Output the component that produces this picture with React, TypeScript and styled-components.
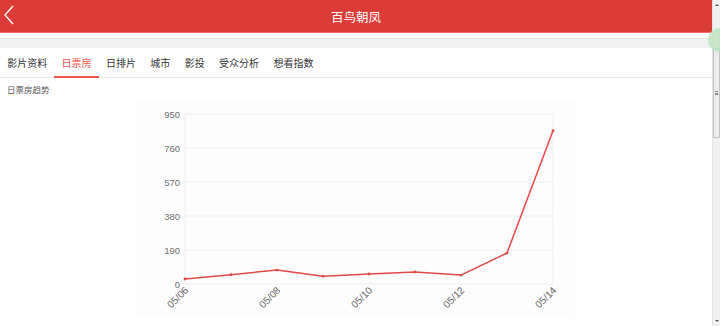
import React from "react";
import styled, { createGlobalStyle } from "styled-components";

const GlobalStyle = createGlobalStyle`
  html, body { margin: 0; padding: 0; background: #fff; overflow: hidden; }
  body { font-family: "Noto Sans CJK SC", "Noto Sans", sans-serif; }
`;

const Page = styled.div`
  position: relative;
  display: flex;
  width: 720px;
  height: 326px;
  overflow: hidden;
`;

const Main = styled.div`
  flex: 1;
  display: flex;
  flex-direction: column;
  min-width: 0;
`;

const Header = styled.header`
  height: 32px;
  background: #dc3c38;
  border-bottom: 1px solid #ea6f6b;
  display: flex;
  align-items: center;
  justify-content: center;
  position: relative;
`;

const BackButton = styled.div`
  position: absolute;
  left: 3px;
  top: 5px;
  width: 12px;
  height: 20px;
  display: flex;
`;

const Title = styled.h1`
  margin: 0;
  font-size: 12.5px;
  font-weight: 400;
  color: #fff;
`;

const Gap = styled.div`
  height: 5px;
  background: #fff;
`;

const GrayBand = styled.div`
  height: 9px;
  background: #f2f2f2;
  border-top: 1px solid #e4e4e4;
`;

const TabBar = styled.nav`
  display: flex;
  height: 30px;
  padding-left: 0;
  border-bottom: 1px solid #e8e8e8;
  box-sizing: border-box;
`;

const Tab = styled.div<{ $active?: boolean }>`
  display: flex;
  align-items: center;
  padding: 1px 7.2px 0;
  font-size: 10px;
  color: ${(p) => (p.$active ? "#f0524e" : "#333")};
  border-bottom: 2px solid ${(p) => (p.$active ? "#f0524e" : "transparent")};
  margin-bottom: -1px;
`;

const SectionTitle = styled.div`
  padding: 6px 0 0 7px;
  font-size: 8.5px;
  line-height: 11px;
  color: #555;
`;

const ChartWrap = styled.div`
  padding: 5px 0 0 135px;
  display: flex;
`;

const ScrollBar = styled.div`
  width: 8px;
  display: flex;
  flex-direction: column;
  background: #f0f0f0;
  border-left: 1px solid #e2e2e2;
  box-sizing: border-box;
`;

const Arrow = styled.div<{ $down?: boolean }>`
  height: 10px;
  display: flex;
  align-items: center;
  justify-content: center;
  &::after {
    content: "";
    width: 0;
    height: 0;
    border-left: 2px solid transparent;
    border-right: 2px solid transparent;
    ${(p) =>
      p.$down ? "border-top: 2px solid #555;" : "border-bottom: 2px solid #555;"}
  }
`;

const TrackGap = styled.div<{ $h?: number }>`
  height: ${(p) => (p.$h ? `${p.$h}px` : "auto")};
  flex: ${(p) => (p.$h ? "none" : 1)};
`;

const Thumb = styled.div`
  height: 90px;
  background: #ececec;
  border: 1px solid #c4c4c4;
  box-sizing: border-box;
  display: flex;
  align-items: center;
  justify-content: center;
  &::after {
    content: "";
    width: 3px;
    height: 4px;
    border-top: 1px solid #888;
    border-bottom: 1px solid #888;
    box-sizing: border-box;
    background: linear-gradient(#888, #888) center / 100% 1px no-repeat;
  }
`;

const Bubble = styled.div`
  position: absolute;
  left: 708px;
  top: 28px;
  width: 24px;
  height: 24px;
  border-radius: 50%;
  background: rgba(190, 226, 190, 0.8);
`;

const tabs = ["影片资料", "日票房", "日排片", "城市", "影投", "受众分析", "想看指数"];

const values = [28, 52, 78, 43, 56, 67, 50, 173, 857];
const dates = ["05/06", "05/07", "05/08", "05/09", "05/10", "05/11", "05/12", "05/13", "05/14"];

const W = 440;
const H = 218;
const L = 50;
const R = 418;
const T = 14;
const B = 184;

function Chart() {
  const yTicks = [0, 190, 380, 570, 760, 950];
  const xs = values.map((_, i) => L + ((R - L) / (values.length - 1)) * i);
  const ys = values.map((v) => B - (v / 950) * (B - T));
  const pts = xs.map((x, i) => `${x},${ys[i]}`).join(" ");
  return (
    <svg width={W} height={H} viewBox={`0 0 ${W} ${H}`}>
      <rect x={0} y={0} width={W} height={H} fill="#fdfdfd" />
      {yTicks.map((t) => {
        const y = B - (t / 950) * (B - T);
        return (
          <g key={t}>
            <line x1={L} x2={R} y1={y} y2={y} stroke="#efefef" strokeWidth={1} />
            <text
              x={45}
              y={y + 3.5}
              textAnchor="end"
              fontSize={9.5}
              fontFamily="'Liberation Sans', Arial, sans-serif"
              fill="#6f6f6f"
            >
              {t}
            </text>
          </g>
        );
      })}
      <line x1={L} x2={L} y1={T} y2={B} stroke="#efefef" />
      <line x1={R} x2={R} y1={T} y2={B} stroke="#efefef" />
      {xs.map((x, i) =>
        i % 2 === 0 ? (
          <text
            key={dates[i]}
            x={x + 4}
            y={B + 7}
            textAnchor="end"
            fontSize={10}
            fontFamily="'Liberation Sans', Arial, sans-serif"
            fill="#666"
            transform={`rotate(-45 ${x + 4} ${B + 7})`}
          >
            {dates[i]}
          </text>
        ) : null
      )}
      <polyline points={pts} fill="none" stroke="#e04a47" strokeWidth={1.5} strokeLinejoin="round" />
      {xs.map((x, i) => (
        <circle key={i} cx={x} cy={ys[i]} r={1.4} fill="#e04a47" />
      ))}
    </svg>
  );
}

export default function App() {
  return (
    <>
      <GlobalStyle />
      <Page>
        <Main>
          <Header>
            <BackButton>
              <svg width="12" height="20" viewBox="0 0 12 20">
                <polyline points="10,1 2,10 10,19" fill="none" stroke="#fff" strokeWidth="1.3" />
              </svg>
            </BackButton>
            <Title>百鸟朝凤</Title>
          </Header>
          <Gap />
          <GrayBand />
          <TabBar>
            {tabs.map((t) => (
              <Tab key={t} $active={t === "日票房"}>
                {t}
              </Tab>
            ))}
          </TabBar>
          <SectionTitle>日票房趋势</SectionTitle>
          <ChartWrap>
            <Chart />
          </ChartWrap>
        </Main>
        <ScrollBar>
          <Arrow />
          <TrackGap $h={38} />
          <Thumb />
          <TrackGap />
          <Arrow $down />
        </ScrollBar>
        <Bubble />
      </Page>
    </>
  );
}
